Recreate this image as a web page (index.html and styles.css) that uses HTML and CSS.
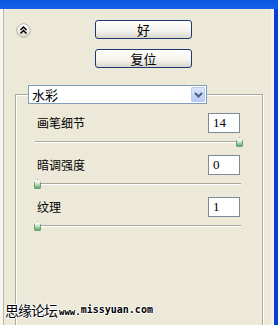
FILE: index.html
```html
<!DOCTYPE html>
<html>

<head>
  <title>水彩</title>
  <meta charset="utf-8">
  <link rel="stylesheet" href="styles.css">
</head>

<body>
  <div class="titlebar"></div>

  <div class="window">
    <div class="edge-left"></div>

    <div class="panel">
      <!-- 顶部按钮 -->
      <div class="top">
        <button class="collapse">
          <svg width="15" height="15" viewBox="0 0 15 15">
            <defs>
              <linearGradient id="cg" x1="0" y1="0" x2="0" y2="1">
                <stop offset="0" stop-color="#ffffff" />
                <stop offset="1" stop-color="#dcd9cc" />
              </linearGradient>
            </defs>
            <circle cx="7.5" cy="7.5" r="6.8" fill="url(#cg)" stroke="#b5b2a6" stroke-width="1" />
            <path d="M4.5 7 L7.5 4 L10.5 7 M4.5 10.5 L7.5 7.5 L10.5 10.5" fill="none" stroke="#000" stroke-width="1.5" />
          </svg>
        </button>
        <div class="actions">
          <button class="btn">好</button>
          <button class="btn">复位</button>
        </div>
      </div>

      <!-- 滤镜参数 -->
      <fieldset class="group">
        <legend class="filter-select">
          <span class="filter-name">水彩</span>
          <span class="arrow">
            <svg width="9" height="6" viewBox="0 0 9 6">
              <path d="M1 1 L4.5 4.5 L8 1" fill="none" stroke="#4d6185" stroke-width="2" />
            </svg>
          </span>
        </legend>

        <div class="param first">
          <div class="param-head">
            <label>画笔细节</label>
            <input type="text" value="14">
          </div>
          <div class="slider">
            <div class="track"></div>
            <div class="rail"><span class="thumb" style="left:100%"></span></div>
          </div>
        </div>

        <div class="param">
          <div class="param-head">
            <label>暗调强度</label>
            <input type="text" value="0">
          </div>
          <div class="slider">
            <div class="track"></div>
            <div class="rail"><span class="thumb" style="left:0%"></span></div>
          </div>
        </div>

        <div class="param">
          <div class="param-head">
            <label>纹理</label>
            <input type="text" value="1">
          </div>
          <div class="slider">
            <div class="track"></div>
            <div class="rail"><span class="thumb" style="left:0%"></span></div>
          </div>
        </div>
      </fieldset>
    </div>

    <div class="edge-right"></div>
  </div>

  <div class="watermark"><span class="wm-cn">思缘论坛</span><span class="wm-www">www.</span><span class="wm-url">missyuan.com</span></div>
</body>

</html>
```

FILE: styles.css
```css
body {
  margin: 0;
  width: 278px;
  height: 325px;
  overflow: hidden;
  position: relative;
  background: #ece9d8;
  font-family: "Noto Sans CJK SC", sans-serif;
  font-size: 12px;
  color: #000;
}

.titlebar {
  height: 9px;
  background: linear-gradient(#0a58e0, #1760ea);
}

.window {
  display: flex;
  height: 316px;
}

.edge-left {
  width: 3px;
  background: #f7f6f1;
  border-right: 1px solid #b9b6a8;
}

.edge-right {
  width: 4px;
  background: #0b3ed4;
  border-left: 3px solid #f3f1e8;
}

.panel {
  flex: 1;
  padding-top: 11px;
}

.top {
  display: flex;
  padding-left: 12px;
}

.collapse {
  width: 15px;
  height: 15px;
  margin-top: 3px;
  padding: 0;
  border: none;
  background: none;
}

.collapse svg {
  display: block;
}

.actions {
  display: flex;
  flex-direction: column;
  gap: 10px;
  margin-left: 64px;
}

.btn {
  width: 97px;
  height: 19px;
  padding: 0;
  border: 1px solid #1c3a6e;
  border-radius: 3px;
  background: linear-gradient(#ffffff, #f3f2ec 60%, #d9d6cb);
  font-family: "Noto Sans CJK SC", sans-serif;
  font-size: 13px;
  line-height: 17px;
  color: #000;
}

.group {
  box-sizing: border-box;
  width: 248px;
  height: 241px;
  margin: 17px 0 0 11px;
  padding: 0;
  border: 1px solid #aca899;
  box-shadow: inset 1px 1px 0 #fff, 1px 1px 0 #fff;
}

.filter-select {
  box-sizing: border-box;
  display: flex;
  align-items: center;
  width: 179px;
  height: 19px;
  margin-left: 12px;
  padding: 0;
  border: 1px solid #7f9db9;
  background: #fff;
}

.filter-name {
  flex: 1;
  padding-left: 3px;
  font-size: 13px;
  line-height: 17px;
}

.arrow {
  box-sizing: border-box;
  display: flex;
  align-items: center;
  justify-content: center;
  width: 14px;
  height: 15px;
  margin-right: 1px;
  border: 1px solid #b9cbf3;
  border-radius: 1px;
  background: linear-gradient(#dbe6fd, #b8cbf5);
}

.param.first {
  padding-top: 9px;
}

.param-head {
  display: flex;
  justify-content: space-between;
  align-items: center;
  height: 20px;
  padding: 0 22px 0 21px;
}

.param-head label {
  font-size: 12px;
  line-height: 14px;
}

.param-head input {
  box-sizing: border-box;
  width: 32px;
  height: 20px;
  padding: 0 0 0 4px;
  border: 1px solid #7f8a99;
  background: #fff;
  font-family: "Liberation Serif", serif;
  font-size: 13px;
  color: #000;
}

.slider {
  position: relative;
  height: 22px;
  margin: 0 21px 0 19px;
}

.track {
  position: relative;
  top: 8px;
  height: 1px;
  background: #aca899;
  border-bottom: 1px solid #fff;
}

.rail {
  position: absolute;
  top: 4px;
  left: 3px;
  right: 1px;
  height: 10px;
}

.thumb {
  position: absolute;
  top: 0;
  width: 7px;
  height: 10px;
  margin-left: -4px;
  background: linear-gradient(#ffffff, #d5e8d0 45%, #4fae55);
  border: 1px solid #7a9a84;
  box-sizing: border-box;
  clip-path: polygon(50% 0, 100% 35%, 100% 100%, 0 100%, 0 35%);
  border-radius: 1px;
}

.watermark {
  position: absolute;
  left: 5px;
  top: 301px;
  display: flex;
  align-items: flex-end;
  text-shadow: 1px 0 #fff, -1px 0 #fff, 0 1px #fff, 0 -1px #fff;
}

.wm-cn {
  font-size: 14px;
  line-height: 18px;
  letter-spacing: -1px;
}

.wm-www {
  margin-left: 2px;
  padding-bottom: 2px;
  font-family: "DejaVu Sans Mono", monospace;
  font-size: 9px;
  line-height: 9px;
  font-weight: bold;
}

.wm-url {
  padding-bottom: 4px;
  font-family: "DejaVu Sans Mono", monospace;
  font-size: 10px;
  line-height: 10px;
  font-weight: bold;
}
```
